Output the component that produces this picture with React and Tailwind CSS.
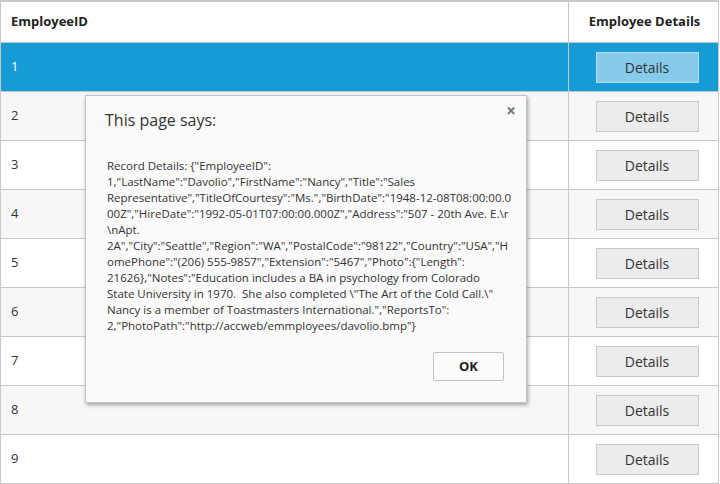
import React from 'react';

const rows = [1, 2, 3, 4, 5, 6, 7, 8, 9];

const messageLines = [
  'Record Details: {"EmployeeID":',
  '1,"LastName":"Davolio","FirstName":"Nancy","Title":"Sales',
  'Representative","TitleOfCourtesy":"Ms.","BirthDate":"1948-12-08T08:00:00.0',
  '00Z","HireDate":"1992-05-01T07:00:00.000Z","Address":"507 - 20th Ave. E.\\r',
  '\\nApt.',
  '2A","City":"Seattle","Region":"WA","PostalCode":"98122","Country":"USA","H',
  'omePhone":"(206) 555-9857","Extension":"5467","Photo":{"Length":',
  '21626},"Notes":"Education includes a BA in psychology from Colorado',
  'State University in 1970.  She also completed \\"The Art of the Cold Call.\\"',
  'Nancy is a member of Toastmasters International.","ReportsTo":',
  '2,"PhotoPath":"http://accweb/emmployees/davolio.bmp"}',
];

function Row({ id }) {
  const selected = id === 1;
  const rowBg = selected ? 'bg-[#179bd7] text-white' : id % 2 === 0 ? 'bg-[#f7f7f7] text-[#333]' : 'bg-white text-[#333]';
  return (
    <div className={`flex h-[49px] border-b border-[#c8c8c8] ${rowBg}`}>
      <div className="flex-1 flex items-center pl-[10px] text-[13px]">{id}</div>
      <div className="w-[150px] border-l border-[#c8c8c8] flex items-center justify-center">
        <button
          className={`w-[103px] h-[31px] ml-[7px] border text-[14px] text-[#333] ${
            selected ? 'bg-[#87cbea] border-[#b8dbea]' : 'bg-[#ececec] border-[#c8c8c8]'
          }`}
        >
          Details
        </button>
      </div>
    </div>
  );
}

export default function App() {
  return (
    <div className="relative w-[720px] h-[484px] overflow-hidden bg-white" style={{ fontFamily: '"Open Sans", "Noto Sans", sans-serif' }}>
      <div className="w-[719px] border-t-2 border-l border-r border-[#c8c8c8]">
        <div className="flex h-[41px] border-b border-[#c8c8c8] bg-white text-[#222] font-bold text-[13px]">
          <div className="flex-1 flex items-center pl-[10px]">EmployeeID</div>
          <div className="w-[150px] border-l border-[#c8c8c8] flex items-center justify-center pl-[2px]">Employee Details</div>
        </div>
        {rows.map((id) => (
          <Row key={id} id={id} />
        ))}
      </div>

      <div className="absolute left-[85px] top-[95px] w-[442px] h-[308px] bg-[#fafafa] border border-[#c4c4c4] shadow-[1px_2px_4px_rgba(0,0,0,0.35)]">
        <div className="absolute right-[10px] top-[6px] text-[#777] text-[17px] font-bold leading-none">×</div>
        <div className="pl-[19px] pt-[13px] text-[16px] text-[#333] leading-[22px]">This page says:</div>
        <div className="pl-[21px] pt-[27px] text-[#333] text-[11.5px] leading-[16px] whitespace-pre">
          {messageLines.map((line, i) => (
            <div key={i}>{line}</div>
          ))}
        </div>
        <div className="absolute left-[347px] top-[256px]">
          <button className="w-[71px] h-[29px] border border-[#c4c4c4] bg-[#fbfbfb] rounded-[2px] text-[13px] font-bold text-[#222]">
            OK
          </button>
        </div>
      </div>
    </div>
  );
}
